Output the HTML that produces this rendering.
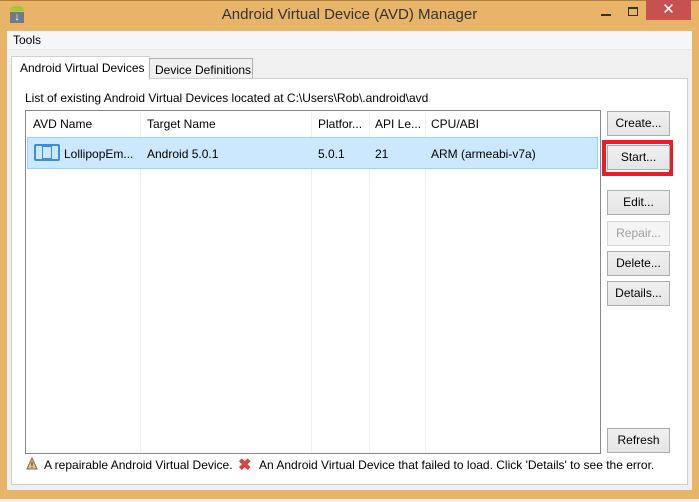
<!DOCTYPE html>
<html><head><style>
*{margin:0;padding:0;box-sizing:border-box}
body{width:699px;height:502px;background:#e8b467;position:relative;overflow:hidden;font-family:"Liberation Sans",sans-serif;font-size:12px;color:#000}
.a{position:absolute}
.btn{position:absolute;left:607px;width:63px;height:25px;background:linear-gradient(#f0f0f0,#e5e5e5);border:1px solid #acacac;text-align:center;line-height:23px;font-size:12px}
.vl{position:absolute;top:1px;bottom:1px;width:1px;background:#e8f0fa}
.h{position:absolute;top:6px;font-size:12px}
</style></head><body>
<div class="a" style="left:0;top:0;width:699px;height:1px;background:#b08040"></div>
<div class="a" style="left:10px;top:6px;width:14px;height:5px;background:#a4c639;border-radius:7px 7px 0 0"></div>
<div class="a" style="left:10px;top:12px;width:14px;height:11px;background:#6d7b8a;color:#fff;font-size:11px;line-height:11px;text-align:center;font-weight:bold">↓</div>
<div class="a" style="left:0;top:6px;width:699px;text-align:center;font-size:15px;color:#333">Android Virtual Device (AVD) Manager</div>
<div class="a" style="left:601px;top:14px;width:10px;height:2px;background:#333"></div>
<div class="a" style="left:628px;top:7px;width:10px;height:9px;border:1px solid #333;border-top-width:2px"></div>
<div class="a" style="left:646px;top:0;width:45px;height:20px;background:#c75050;color:#fff;text-align:center;font-size:15px;line-height:20px">✕</div>
<div class="a" style="left:7px;top:31px;width:685px;height:459px;background:#f0f0f0"></div>
<div class="a" style="left:7px;top:31px;width:685px;height:19px;background:#f5f6f7;border-bottom:1px solid #e8e8e8"></div>
<div class="a" style="left:13px;top:33px;font-size:12px">Tools</div>
<div class="a" style="left:11px;top:78px;width:677px;height:407px;background:#fff;border:1px solid #d0d0d0"></div>
<div class="a" style="left:11px;top:56px;width:139px;height:24px;background:#fff;border:1px solid #d0d0d0;border-bottom:none;padding:4px 0 0 8px">Android Virtual Devices</div>
<div class="a" style="left:149px;top:58px;width:104px;height:20px;background:#f0f0f0;border:1px solid #b0b0b0;border-bottom:none;padding:4px 0 0 5px">Device Definitions</div>
<div class="a" style="left:25px;top:91px">List of existing Android Virtual Devices located at C:\Users\Rob\.android\avd</div>
<div class="a" style="left:25px;top:110px;width:576px;height:344px;border:1px solid #828790;background:#fff">
<div class="vl" style="left:114px"></div><div class="vl" style="left:285px"></div><div class="vl" style="left:343px"></div><div class="vl" style="left:399px"></div>
<div class="h" style="left:7px">AVD Name</div><div class="h" style="left:121px">Target Name</div><div class="h" style="left:292px">Platfor...</div><div class="h" style="left:349px">API Le...</div><div class="h" style="left:405px">CPU/ABI</div>
<div class="a" style="left:1px;top:26px;width:571px;height:32px;background:#cce8ff;border:1px solid #99d1ff"></div>
<div class="a" style="left:8px;top:33px;width:26px;height:17px;border:2px solid #3c8fd6;border-radius:2px"></div>
<div class="a" style="left:16px;top:35px;width:10px;height:13px;border:1px solid #3c8fd6"></div>
<div class="h" style="top:36px;left:38px">LollipopEm...</div><div class="h" style="top:36px;left:121px">Android 5.0.1</div><div class="h" style="top:36px;left:292px">5.0.1</div><div class="h" style="top:36px;left:349px">21</div><div class="h" style="top:36px;left:405px">ARM (armeabi-v7a)</div>
</div>
<div class="btn" style="top:111px">Create...</div>
<div class="a" style="left:602px;top:140px;width:71px;height:36px;border:4px solid #ed1c24"></div>
<div class="btn" style="top:145px">Start...</div>
<div class="btn" style="top:190px">Edit...</div>
<div class="btn" style="top:221px;color:#a0a0a0;background:#f4f4f4;border-color:#d5d5d5">Repair...</div>
<div class="btn" style="top:251px">Delete...</div>
<div class="btn" style="top:281px">Details...</div>
<div class="btn" style="top:428px">Refresh</div>
<svg class="a" style="left:26px;top:457px" width="12" height="13"><path d="M6 1 L11 12 L1 12 Z" fill="#e9c48a" stroke="#7a6a50"/><rect x="5.5" y="5" width="1" height="4" fill="#333"/><rect x="5.5" y="10" width="1" height="1" fill="#333"/></svg>
<div class="a" style="left:44px;top:458px">A repairable Android Virtual Device.</div>
<div class="a" style="left:238px;top:455px;color:#e04040;font-size:16px;font-weight:bold">✖</div>
<div class="a" style="left:259px;top:458px">An Android Virtual Device that failed to load. Click 'Details' to see the error.</div>
<div class="a" style="left:0;top:499px;width:699px;height:3px;background:#f0f0f0"></div>
</body></html>
